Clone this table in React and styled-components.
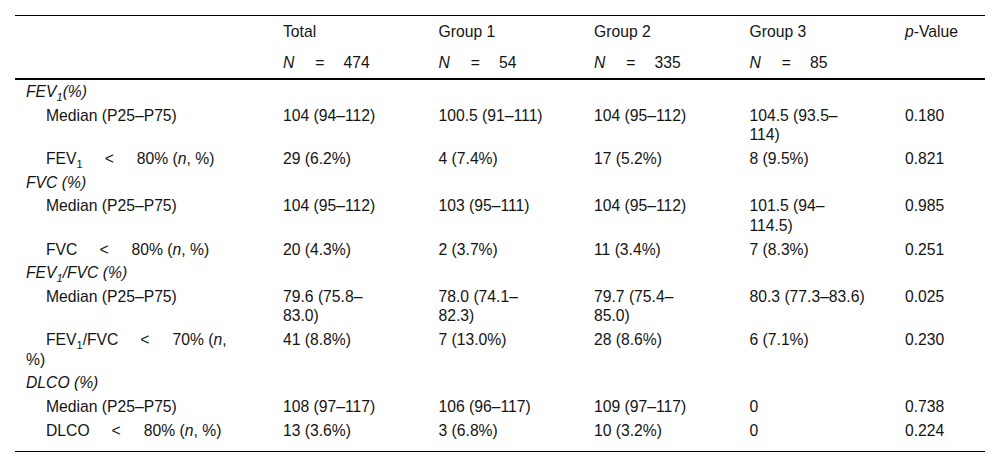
import React from 'react';
import styled, { createGlobalStyle } from 'styled-components';

const GlobalStyle = createGlobalStyle`
  html, body {
    margin: 0;
    padding: 0;
    background: #ffffff;
  }
  body {
    font-family: "Liberation Sans", Arial, sans-serif;
    color: #141414;
  }
`;

const Page = styled.div`
  padding: 15px 15px 0 15px;
`;

const Table = styled.table`
  width: 970px;
  border-collapse: collapse;
  table-layout: fixed;
  font-size: 15.7px;
  line-height: 19.5px;
  border-top: 1px solid #000;
  border-bottom: 1px solid #000;
`;

const Col = styled.col`
  width: ${p => p.$w}px;
`;

const Head = styled.thead`
  border-bottom: 2px solid #000;
`;

const HeadCell = styled.th`
  font-weight: normal;
  text-align: left;
  vertical-align: top;
  white-space: nowrap;
  padding: 5.75px 0 5.75px 11px;
`;

const SectionCell = styled.td`
  font-style: italic;
  padding: 2.1px 0 2.1px 11px;
  white-space: nowrap;
`;

const LabelCell = styled.td`
  vertical-align: top;
  white-space: nowrap;
  padding: 2.1px 0 ${p => (p.$end ? '10.6px' : '2.1px')} 11px;
  text-indent: 20px;
`;

const Cell = styled.td`
  vertical-align: top;
  white-space: nowrap;
  padding: 2.1px 0 ${p => (p.$end ? '10.6px' : '2.1px')} 11px;
`;

const Sub = styled.sub`
  font-size: 0.7em;
  line-height: 0;
  vertical-align: -0.4em;
`;

// spaced operator, "=" in N row and "<" in the cut-off rows
const Op = styled.span`
  display: inline-block;
  text-indent: 0;
  font-style: normal;
  margin: 0 ${p => (p.$wide ? 23 : 19)}px 0 ${p => (p.$wide ? 22 : 21)}px;
`;

const Em = styled.i`
  font-style: italic;
`;

const Lines = ({ lines }) =>
  lines.map((l, i) => (
    <React.Fragment key={i}>
      {i > 0 && <br />}
      {l}
    </React.Fragment>
  ));

const FEV1 = () => (
  <>
    FEV<Sub>1</Sub>
  </>
);

const nPct = (
  <>
    (<Em>n</Em>, %)
  </>
);

const sections = [
  {
    title: (
      <>
        FEV<Sub>1</Sub>(%)
      </>
    ),
    rows: [
      {
        label: 'Median (P25–P75)',
        values: [['104 (94–112)'], ['100.5 (91–111)'], ['104 (95–112)'], ['104.5 (93.5–', '114)']],
        p: '0.180',
      },
      {
        label: (
          <>
            <FEV1 />
            <Op $wide>&lt;</Op>80% {nPct}
          </>
        ),
        values: [['29 (6.2%)'], ['4 (7.4%)'], ['17 (5.2%)'], ['8 (9.5%)']],
        p: '0.821',
      },
    ],
  },
  {
    title: 'FVC (%)',
    rows: [
      {
        label: 'Median (P25–P75)',
        values: [['104 (95–112)'], ['103 (95–111)'], ['104 (95–112)'], ['101.5 (94–', '114.5)']],
        p: '0.985',
      },
      {
        label: (
          <>
            FVC<Op $wide>&lt;</Op>80% {nPct}
          </>
        ),
        values: [['20 (4.3%)'], ['2 (3.7%)'], ['11 (3.4%)'], ['7 (8.3%)']],
        p: '0.251',
      },
    ],
  },
  {
    title: (
      <>
        FEV<Sub>1</Sub>/FVC (%)
      </>
    ),
    rows: [
      {
        label: 'Median (P25–P75)',
        values: [['79.6 (75.8–', '83.0)'], ['78.0 (74.1–', '82.3)'], ['79.7 (75.4–', '85.0)'], ['80.3 (77.3–83.6)']],
        p: '0.025',
      },
      {
        label: (
          <>
            <FEV1 />/FVC<Op $wide>&lt;</Op>70% (<Em>n</Em>,
            <br />
            %)
          </>
        ),
        values: [['41 (8.8%)'], ['7 (13.0%)'], ['28 (8.6%)'], ['6 (7.1%)']],
        p: '0.230',
      },
    ],
  },
  {
    title: 'DLCO (%)',
    rows: [
      {
        label: 'Median (P25–P75)',
        values: [['108 (97–117)'], ['106 (96–117)'], ['109 (97–117)'], ['0']],
        p: '0.738',
      },
      {
        label: (
          <>
            DLCO<Op $wide>&lt;</Op>80% {nPct}
          </>
        ),
        values: [['13 (3.6%)'], ['3 (6.8%)'], ['10 (3.2%)'], ['0']],
        p: '0.224',
      },
    ],
  },
];

const groups = [
  { name: 'Total', n: '474' },
  { name: 'Group 1', n: '54' },
  { name: 'Group 2', n: '335' },
  { name: 'Group 3', n: '85' },
];

export default function App() {
  return (
    <>
      <GlobalStyle />
      <Page>
        <Table>
          <colgroup>
            <Col $w={257} />
            <Col $w={155.5} />
            <Col $w={155.5} />
            <Col $w={155.5} />
            <Col $w={155.5} />
            <Col $w={91} />
          </colgroup>
          <Head>
            <tr>
              <HeadCell />
              {groups.map(g => (
                <HeadCell key={g.name}>{g.name}</HeadCell>
              ))}
              <HeadCell>
                <Em>p</Em>-Value
              </HeadCell>
            </tr>
            <tr>
              <HeadCell />
              {groups.map(g => (
                <HeadCell key={g.name}>
                  <Em>N</Em>
                  <Op>=</Op>
                  {g.n}
                </HeadCell>
              ))}
              <HeadCell />
            </tr>
          </Head>
          <tbody>
            {sections.map((s, si) => (
              <React.Fragment key={si}>
                <tr>
                  <SectionCell colSpan={6}>{s.title}</SectionCell>
                </tr>
                {s.rows.map((r, ri) => {
                  const end = si === sections.length - 1 && ri === s.rows.length - 1;
                  return (
                    <tr key={ri}>
                      <LabelCell $end={end}>{r.label}</LabelCell>
                      {r.values.map((v, vi) => (
                        <Cell key={vi} $end={end}>
                          <Lines lines={v} />
                        </Cell>
                      ))}
                      <Cell $end={end}>{r.p}</Cell>
                    </tr>
                  );
                })}
              </React.Fragment>
            ))}
          </tbody>
        </Table>
      </Page>
    </>
  );
}
